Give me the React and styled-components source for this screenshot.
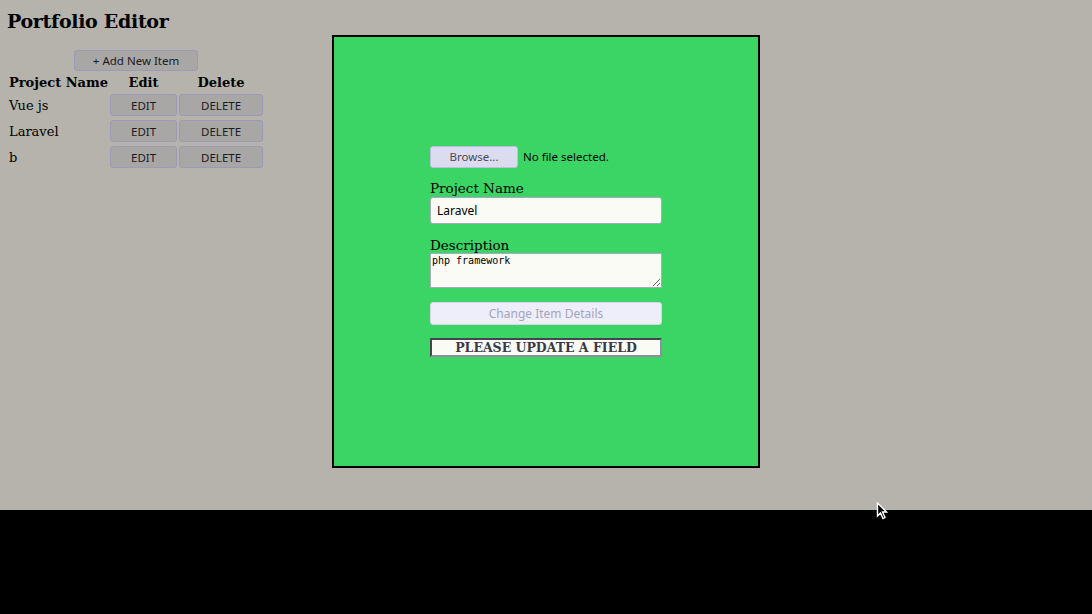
import React from 'react';
import styled, { createGlobalStyle } from 'styled-components';

const GlobalStyle = createGlobalStyle`
  html, body {
    margin: 0;
    padding: 0;
    background: #000;
  }
  body {
    font-family: "DejaVu Serif", serif;
  }
`;

const Screen = styled.div`
  position: relative;
  height: 614px;
  display: flex;
  flex-direction: column;
`;

const Page = styled.main`
  height: 510px;
  box-sizing: border-box;
  padding: 8px 8px 0 7px;
  background: #b5b3ab;
  color: #000;
`;

const Footer = styled.div`
  flex: 1;
  background: #000;
`;

const Title = styled.h1`
  margin: 0;
  font-family: "DejaVu Serif", serif;
  font-size: 19px;
  font-weight: bold;
  line-height: 27px;
  letter-spacing: -0.3px;
`;

const Layout = styled.div`
  display: flex;
  align-items: flex-start;
`;

const Sidebar = styled.div`
  width: 258px;
  padding-top: 19px;
  margin-right: 67px;
`;

const Table = styled.table`
  border-collapse: separate;
  border-spacing: 2px 4px;
  margin-top: -4px;
`;

const Caption = styled.caption`
  caption-side: top;
  text-align: center;
  padding-bottom: 0;
`;

const Th = styled.th`
  font-size: 13px;
  font-weight: bold;
  white-space: nowrap;
  text-align: ${p => (p.$left ? 'left' : 'center')};
  padding: 0;
  height: 15px;
  line-height: 15px;
`;

const Td = styled.td`
  font-size: 13px;
  white-space: nowrap;
  padding: 0;
  height: 22px;
  width: ${p => p.$w || 'auto'};
`;

const GreyButton = styled.button`
  display: block;
  width: ${p => p.$w};
  height: ${p => p.$h || '22px'};
  margin: 0 auto;
  padding: 0;
  background: #a9a7a6;
  border: 1px solid #9c9ab6;
  border-radius: 3px;
  font-family: "Noto Sans", sans-serif;
  font-size: 11.5px;
  color: #1a1a22;
`;

const Panel = styled.section`
  box-sizing: border-box;
  width: 428px;
  height: 433px;
  padding-top: 109px;
  border: 2px solid #000;
  background: #3ad564;
  display: flex;
  justify-content: center;
`;

const Form = styled.form`
  width: 232px;
  display: flex;
  flex-direction: column;
`;

const FileRow = styled.div`
  display: flex;
  align-items: center;
  gap: 5px;
  height: 21px;
`;

const BrowseButton = styled.button`
  width: 88px;
  height: 22px;
  padding: 0;
  border: 1px solid #bfbde0;
  border-radius: 3px;
  background: #dcdcf0;
  font-family: "Noto Sans", sans-serif;
  font-size: 11.5px;
  color: #4a4a55;
`;

const FileText = styled.span`
  font-family: "Noto Sans", sans-serif;
  font-size: 11.5px;
  color: #000;
`;

const Label = styled.label`
  font-family: "DejaVu Serif", serif;
  font-size: 13.5px;
  line-height: 16px;
  margin-top: ${p => p.$top};
`;

const TextInput = styled.input`
  box-sizing: border-box;
  width: 232px;
  height: 27px;
  margin-top: 1px;
  padding: 0 6px;
  background: #fbfbf6;
  border: 1px solid #aaa8c2;
  border-radius: 3px;
  font-family: "Noto Sans", sans-serif;
  font-size: 12px;
  color: #000;
`;

const TextArea = styled.textarea`
  box-sizing: border-box;
  display: block;
  width: 232px;
  height: 35px;
  margin-top: 0;
  padding: 0 1px;
  background: #fbfbf6;
  border: 1px solid #aaa8c2;
  border-radius: 0;
  font-family: "DejaVu Sans Mono", monospace;
  font-size: 10px;
  line-height: 13px;
  color: #000;
`;

const SubmitButton = styled.button`
  width: 232px;
  height: 23px;
  margin-top: 14px;
  padding: 0;
  background: #eeeefa;
  border: 1px solid #d6d4ec;
  border-radius: 3px;
  font-family: "Noto Sans", sans-serif;
  font-size: 12px;
  color: #a5a4bd;
`;

const Message = styled.div`
  box-sizing: border-box;
  width: 232px;
  height: 19px;
  margin-top: 13px;
  border: 2px inset #8f8da4;
  background: #fbfbf6;
  font-family: "DejaVu Serif", serif;
  font-weight: bold;
  font-size: 12.5px;
  line-height: 15px;
  text-align: center;
  color: #3a3a46;
`;

const Cursor = styled.svg`
  position: absolute;
  left: 876px;
  top: 502px;
  z-index: 5;
`;

const items = ['Vue js', 'Laravel', 'b'];

export default function App() {
  return (
    <Screen>
      <GlobalStyle />
      <Page>
        <Title>Portfolio Editor</Title>
        <Layout>
          <Sidebar>
            <Table>
              <Caption>
                <GreyButton $w="124px" $h="21px">+ Add New Item</GreyButton>
              </Caption>
              <thead>
                <tr>
                  <Th $left>Project Name</Th>
                  <Th>Edit</Th>
                  <Th>Delete</Th>
                </tr>
              </thead>
              <tbody>
                {items.map(name => (
                  <tr key={name}>
                    <Td $w="98px">{name}</Td>
                    <Td $w="67px"><GreyButton $w="67px">EDIT</GreyButton></Td>
                    <Td $w="84px"><GreyButton $w="84px">DELETE</GreyButton></Td>
                  </tr>
                ))}
              </tbody>
            </Table>
          </Sidebar>
          <Panel>
            <Form onSubmit={e => e.preventDefault()}>
              <FileRow>
                <BrowseButton type="button">Browse...</BrowseButton>
                <FileText>No file selected.</FileText>
              </FileRow>
              <Label $top="13px">Project Name</Label>
              <TextInput defaultValue="Laravel" />
              <Label $top="13px">Description</Label>
              <TextArea defaultValue="php framework" />
              <SubmitButton disabled>Change Item Details</SubmitButton>
              <Message>PLEASE UPDATE A FIELD</Message>
            </Form>
          </Panel>
        </Layout>
      </Page>
      <Footer />
      <Cursor width="13" height="18" viewBox="0 0 13 18">
        <path d="M1.5 1 L1.5 14 L4.5 11 L7 16.5 L9 15.5 L6.5 10 L10.5 10 Z" fill="#000" stroke="#fff" strokeWidth="1.4" />
      </Cursor>
    </Screen>
  );
}
